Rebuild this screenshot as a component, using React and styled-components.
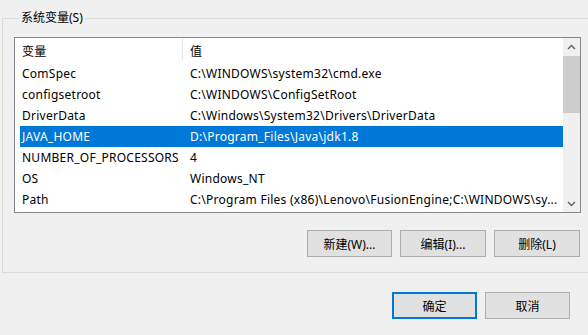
import React from "react";
import styled, { createGlobalStyle } from "styled-components";

const GlobalStyle = createGlobalStyle`
  html, body {
    margin: 0;
    padding: 0;
    background: #f0f0f0;
  }
  body {
    width: 588px;
    height: 335px;
    overflow: hidden;
    font-family: "Noto Sans", "Noto Sans CJK SC", sans-serif;
    font-size: 12px;
    color: #000;
  }
`;

const Dialog = styled.div`
  width: 588px;
  height: 335px;
  display: flex;
  flex-direction: column;
  overflow: hidden;
`;

const GroupBox = styled.fieldset`
  margin: 10px 0 0 2px;
  width: 620px;
  height: 263px;
  box-sizing: border-box;
  border: 1px solid #dcdcdc;
  padding: 11px 0 0 11px;
  flex: none;
`;

const Legend = styled.legend`
  padding: 0 2px;
  margin-left: 5px;
  font-family: "Noto Sans", "Noto Sans CJK SC", sans-serif;
  font-size: 12px;
  line-height: 16px;
`;

const ListBox = styled.div`
  width: 567px;
  height: 176px;
  box-sizing: border-box;
  border: 1px solid #828790;
  background: #fff;
  display: flex;
  letter-spacing: 0.25px;
`;

const ListMain = styled.div`
  flex: 1;
  display: flex;
  flex-direction: column;
`;

const Header = styled.div`
  height: 25px;
  display: flex;
  align-items: stretch;
`;

const HeaderCell = styled.div`
  width: ${(p) => (p.$first ? "168px" : "auto")};
  flex: ${(p) => (p.$first ? "none" : "1")};
  padding-left: 7px;
  box-sizing: border-box;
  display: flex;
  align-items: center;
  border-right: ${(p) => (p.$first ? "1px solid #e5e5e5" : "none")};
  margin-bottom: 3px;
  padding-top: 3px;
`;

const Row = styled.div`
  height: 21px;
  margin-left: 5px;
  display: flex;
  align-items: center;
  background: ${(p) => (p.$selected ? "#0078d7" : "transparent")};
  color: ${(p) => (p.$selected ? "#fff" : "#000")};
  white-space: nowrap;
`;

const NameCell = styled.div`
  width: 168px;
  flex: none;
  padding-left: 2px;
  box-sizing: border-box;
  overflow: hidden;
`;

const ValueCell = styled.div`
  flex: 1;
  padding-left: 2px;
  overflow: hidden;
`;

const ScrollBar = styled.div`
  width: 17px;
  flex: none;
  background: #f0f0f0;
  display: flex;
  flex-direction: column;
`;

const ArrowButton = styled.div`
  height: 17px;
  display: flex;
  align-items: center;
  justify-content: center;
  flex: none;
`;

const Track = styled.div`
  flex: 1;
  display: flex;
  flex-direction: column;
  padding-top: 1px;
`;

const Thumb = styled.div`
  height: 57px;
  background: #cdcdcd;
`;

const ButtonRow = styled.div`
  display: flex;
  justify-content: flex-end;
  gap: 8px;
  padding-right: ${(p) => p.$right}px;
  margin-top: ${(p) => p.$top}px;
`;

const Button = styled.button`
  width: ${(p) => p.$w || 85}px;
  height: ${(p) => p.$h || 27}px;
  box-sizing: border-box;
  background: #e1e1e1;
  border: ${(p) => (p.$default ? "2px solid #0078d7" : "1px solid #adadad")};
  font-family: "Noto Sans", "Noto Sans CJK SC", sans-serif;
  font-size: 12px;
  color: #000;
  padding: 0;
  margin: 0;
  display: flex;
  align-items: center;
  justify-content: center;
`;

const Chevron = ({ up }) => (
  <svg width="9" height="6" viewBox="0 0 9 6">
    <path
      d={up ? "M1 5 L4.5 1.5 L8 5" : "M1 1 L4.5 4.5 L8 1"}
      fill="none"
      stroke="#606060"
      strokeWidth="1.4"
    />
  </svg>
);

const rows = [
  ["ComSpec", "C:\\WINDOWS\\system32\\cmd.exe"],
  ["configsetroot", "C:\\WINDOWS\\ConfigSetRoot"],
  ["DriverData", "C:\\Windows\\System32\\Drivers\\DriverData"],
  ["JAVA_HOME", "D:\\Program_Files\\Java\\jdk1.8"],
  ["NUMBER_OF_PROCESSORS", "4"],
  ["OS", "Windows_NT"],
  ["Path", "C:\\Program Files (x86)\\Lenovo\\FusionEngine;C:\\WINDOWS\\sy..."],
];

export default function App() {
  return (
    <>
      <GlobalStyle />
      <Dialog>
        <GroupBox>
          <Legend>系统变量(S)</Legend>
          <ListBox>
            <ListMain>
              <Header>
                <HeaderCell $first>变量</HeaderCell>
                <HeaderCell>值</HeaderCell>
              </Header>
              {rows.map(([n, v]) => (
                <Row key={n} $selected={n === "JAVA_HOME"}>
                  <NameCell>{n}</NameCell>
                  <ValueCell>{v}</ValueCell>
                </Row>
              ))}
            </ListMain>
            <ScrollBar>
              <ArrowButton>
                <Chevron up />
              </ArrowButton>
              <Track>
                <Thumb />
              </Track>
              <ArrowButton>
                <Chevron />
              </ArrowButton>
            </ScrollBar>
          </ListBox>
          <ButtonRow $right={41} $top={17}>
            <Button>新建(W)...</Button>
            <Button $w={86}>编辑(I)...</Button>
            <Button $w={86}>删除(L)</Button>
          </ButtonRow>
        </GroupBox>
        <ButtonRow $right={18} $top={19}>
          <Button $default>确定</Button>
          <Button>取消</Button>
        </ButtonRow>
      </Dialog>
    </>
  );
}
